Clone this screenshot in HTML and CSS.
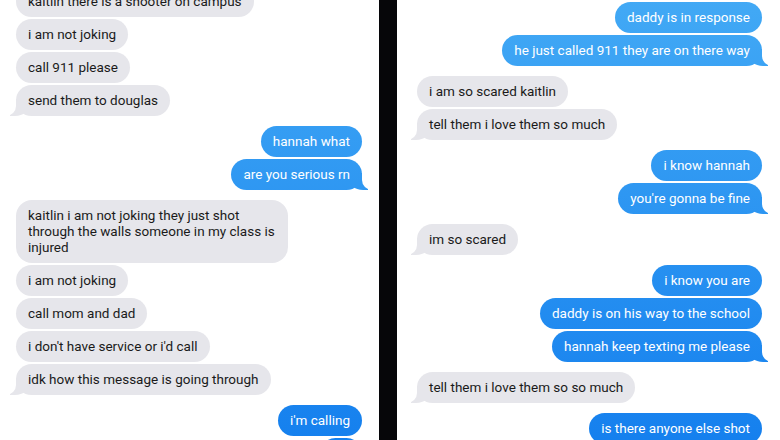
FILE: index.html
```html
<!DOCTYPE html>
<html lang="en">
<head>
  <meta charset="UTF-8" />
  <meta name="viewport" content="width=device-width, initial-scale=1.0" />
  <title>Messages</title>
  <link rel="stylesheet" href="styles.css">
</head>
<body>
  <div class="screens">
    <!-- left screenshot -->
    <div class="chat chat-left">
      <div class="group">
        <div class="bubble in first-cut">kaitlin there is a shooter on campus</div>
        <div class="bubble in">i am not joking</div>
        <div class="bubble in">call 911 please</div>
        <div class="bubble in tail">send them to douglas</div>
      </div>
      <div class="group">
        <div class="bubble out">hannah what</div>
        <div class="bubble out tail">are you serious rn</div>
      </div>
      <div class="group">
        <div class="bubble in">kaitlin i am not joking they just shot through the walls someone in my class is injured</div>
        <div class="bubble in">i am not joking</div>
        <div class="bubble in">call mom and dad</div>
        <div class="bubble in">i don't have service or i'd call</div>
        <div class="bubble in tail">idk how this message is going through</div>
      </div>
      <div class="group">
        <div class="bubble out">i'm calling</div>
        <div class="bubble out stub"></div>
      </div>
    </div>

    <div class="divider"></div>

    <!-- right screenshot -->
    <div class="chat chat-right">
      <div class="group">
        <div class="bubble out">daddy is in response</div>
        <div class="bubble out tail">he just called 911 they are on there way</div>
      </div>
      <div class="group">
        <div class="bubble in">i am so scared kaitlin</div>
        <div class="bubble in tail">tell them i love them so much</div>
      </div>
      <div class="group">
        <div class="bubble out">i know hannah</div>
        <div class="bubble out tail">you're gonna be fine</div>
      </div>
      <div class="group">
        <div class="bubble in tail">im so scared</div>
      </div>
      <div class="group">
        <div class="bubble out">i know you are</div>
        <div class="bubble out">daddy is on his way to the school</div>
        <div class="bubble out tail">hannah keep texting me please</div>
      </div>
      <div class="group">
        <div class="bubble in tail">tell them i love them so so much</div>
      </div>
      <div class="group">
        <div class="bubble out">is there anyone else shot</div>
      </div>
    </div>
  </div>
</body>
</html>
```

FILE: styles.css
```css
html, body { margin: 0; padding: 0; background: #fff; }
body {
  font-family: Roboto, "Liberation Sans", Arial, sans-serif;
  font-size: 13.5px;
  -webkit-font-smoothing: antialiased;
}
.screens {
  display: flex;
  height: 440px;
  overflow: hidden;
}
.divider {
  width: 18px;
  flex-shrink: 0;
  background: #060609;
}
/* each phone screenshot */
.chat {
  display: flex;
  flex-direction: column;
  gap: 10px;
  overflow: hidden;
}
.chat-left { width: 379px; padding: 0 17px 0 16px; box-sizing: border-box; }
.chat-right { flex: 1; padding: 2px 18px 0 20px; box-sizing: border-box; }
.group {
  display: flex;
  flex-direction: column;
  gap: 2px;
}
.bubble {
  position: relative;
  z-index: 0;
  max-width: 248px;
  padding: 7px 12px 8px;
  line-height: 16px;
  border-radius: 16px;
}
.first-cut { margin-top: -14px; }
.in {
  align-self: flex-start;
  background: #e6e6eb;
  color: #1a1a1a;
}
.out {
  align-self: flex-end;
  background: linear-gradient(#42a9f5, #1580ee) fixed;
  color: #fff;
}
.stub { width: 18px; height: 16px; }
/* bubble tails */
.tail::before,
.tail::after {
  content: "";
  position: absolute;
  bottom: 0;
  z-index: -1;
  height: 17px;
}
.in.tail::before {
  left: -6px;
  width: 20px;
  background: #e6e6eb;
  border-bottom-right-radius: 15px 13px;
}
.in.tail::after {
  left: -10px;
  width: 10px;
  background: #fff;
  border-bottom-right-radius: 10px;
}
.out.tail::before {
  right: -6px;
  width: 20px;
  background: linear-gradient(#42a9f5, #1580ee) fixed;
  border-bottom-left-radius: 15px 13px;
}
.out.tail::after {
  right: -10px;
  width: 10px;
  background: #fff;
  border-bottom-left-radius: 10px;
}
```
